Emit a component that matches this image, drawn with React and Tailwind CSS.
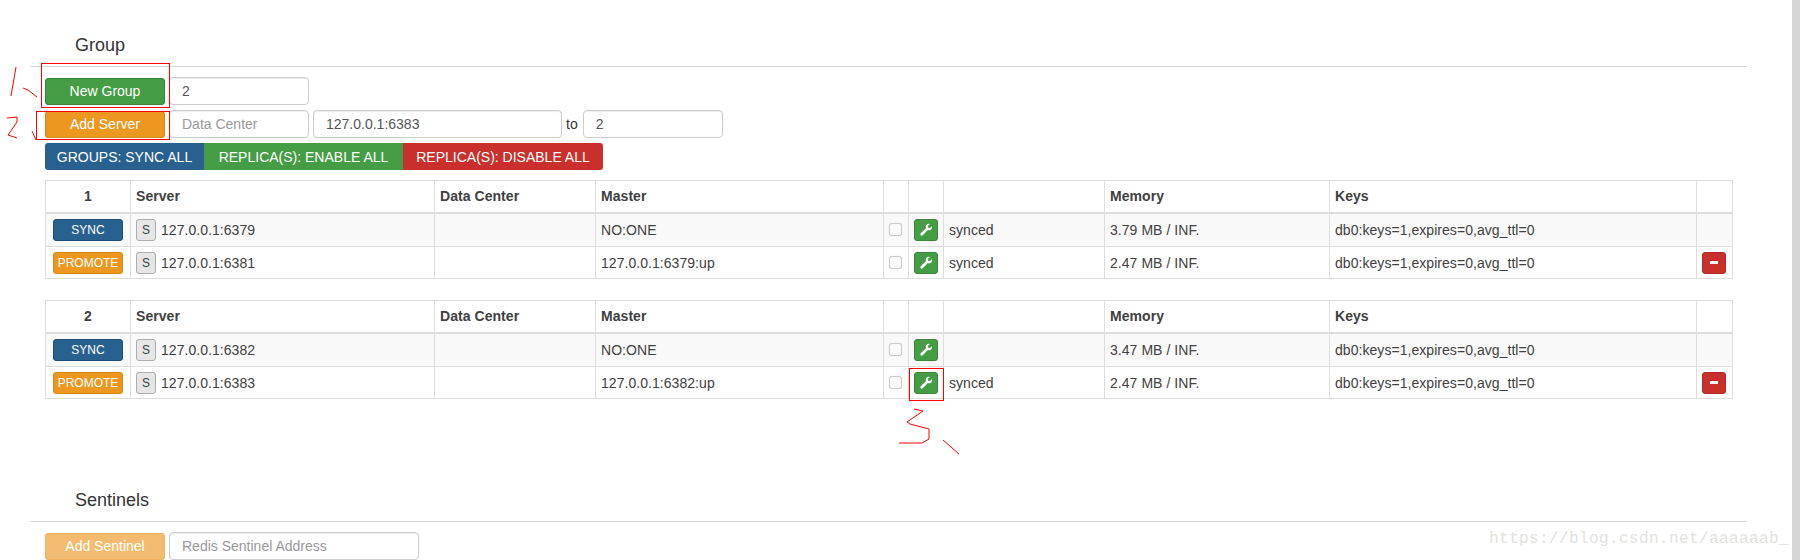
const TXT = "font-['Liberation_Sans',Arial,sans-serif]";

const groups = [
  {
    id: 1,
    rows: [
      { action: "SYNC", addr: "127.0.0.1:6379", master: "NO:ONE", status: "synced", mem: "3.79 MB / INF." },
      { action: "PROMOTE", addr: "127.0.0.1:6381", master: "127.0.0.1:6379:up", status: "synced", mem: "2.47 MB / INF.", remove: true },
    ],
  },
  {
    id: 2,
    rows: [
      { action: "SYNC", addr: "127.0.0.1:6382", master: "NO:ONE", status: "", mem: "3.47 MB / INF." },
      { action: "PROMOTE", addr: "127.0.0.1:6383", master: "127.0.0.1:6382:up", status: "synced", mem: "2.47 MB / INF.", remove: true },
    ],
  },
];

function Input({ className, value, placeholder }) {
  return (
    <input
      readOnly
      value={value}
      placeholder={placeholder}
      className={`h-[28px] rounded border border-[#ccc] bg-white px-3 text-sm text-[#555] placeholder:text-[#999] shadow-[inset_0_1px_1px_rgba(0,0,0,0.075)] ${className}`}
    />
  );
}

function Btn({ color, children }) {
  return (
    <button className={`h-[27px] w-[120px] rounded-[3px] text-sm text-white ${color}`}>
      {children}
    </button>
  );
}

function Wrench() {
  return (
    <button className="flex h-[22px] w-[24px] items-center justify-center rounded-[3px] border border-[#398439] bg-[#449d44]">
      <svg width="14" height="14" viewBox="0 0 16 16" fill="#fff">
        <path d="M12.5 1.2a3.6 3.6 0 0 0-4.6 4.7L2 11.8a1.5 1.5 0 0 0 2.2 2.2l5.9-5.9a3.6 3.6 0 0 0 4.7-4.6l-2.3 2.3-2-.5-.5-2z" />
      </svg>
    </button>
  );
}

function GroupTable({ group }) {
  const th = "border border-[#ddd] border-b-2 px-[5px] font-bold";
  const td = "border border-[#ddd] px-[5px]";
  return (
    <table className="w-[1687px] table-fixed border-collapse text-sm tracking-[0.05px] text-[#404040]">
      <colgroup>
        <col className="w-[85px]" />
        <col className="w-[304px]" />
        <col className="w-[161px]" />
        <col className="w-[288px]" />
        <col className="w-[25px]" />
        <col className="w-[35px]" />
        <col className="w-[161px]" />
        <col className="w-[225px]" />
        <col className="w-[367px]" />
        <col className="w-[36px]" />
      </colgroup>
      <thead>
        <tr className="h-[32px] text-left">
          <th className={`${th} text-center`}>{group.id}</th>
          <th className={th}>Server</th>
          <th className={th}>Data Center</th>
          <th className={th}>Master</th>
          <th className={th}></th>
          <th className={th}></th>
          <th className={th}></th>
          <th className={th}>Memory</th>
          <th className={th}>Keys</th>
          <th className={th}></th>
        </tr>
      </thead>
      <tbody>
        {group.rows.map((row, i) => (
          <tr key={row.addr} className={i === 0 ? "h-[34px] bg-[#f9f9f9]" : "h-[32px]"}>
            <td className={`${td} text-center`}>
              <button
                className={`h-[22px] w-[70px] rounded-[3px] text-xs tracking-normal text-white ${
                  row.action === "SYNC" ? "border border-[#204d74] bg-[#286090]" : "border border-[#d58512] bg-[#ec971f]"
                }`}
              >
                {row.action}
              </button>
            </td>
            <td className={td}>
              <div className="flex items-center gap-[5px]">
                <span className="flex h-[22px] w-[20px] items-center justify-center rounded-[3px] border border-[#adadad] bg-[#e6e6e6] text-xs">
                  S
                </span>
                {row.addr}
              </div>
            </td>
            <td className={td}></td>
            <td className={td}>{row.master}</td>
            <td className={`${td} text-center`}>
              <input type="checkbox" readOnly className="block size-[13px] appearance-none rounded-[3px] border border-[#ccc] bg-[#fafafa] shadow-[0_0_1px_#ccc]" />
            </td>
            <td className={td}>
              <Wrench />
            </td>
            <td className={td}>{row.status}</td>
            <td className={td}>{row.mem}</td>
            <td className={td}>db0:keys=1,expires=0,avg_ttl=0</td>
            <td className={td}>
              {row.remove && (
                <button className="flex h-[22px] w-[24px] items-center justify-center rounded-[3px] border border-[#ac2925] bg-[#c9302c]">
                  <span className="h-[3px] w-[8px] bg-white"></span>
                </button>
              )}
            </td>
          </tr>
        ))}
      </tbody>
    </table>
  );
}

function Section({ title, children }) {
  return (
    <section>
      <h4 className="pl-[45px] text-lg leading-5 text-[#333]">{title}</h4>
      <div className="mt-[11px] border-t border-[#d6d6d6]"></div>
      {children}
    </section>
  );
}

// red pen marks drawn on top of the screenshot
function Annotations() {
  return (
    <svg className="pointer-events-none absolute inset-0" width="1800" height="560" fill="none" stroke="#f00" strokeWidth="1">
      <rect x="41.5" y="63.5" width="128" height="44" />
      <rect x="36.5" y="111.5" width="133" height="28" />
      <path d="M16 67 L11 96" />
      <path d="M23 88 L28 90 L37 97" />
      <path d="M7 118 L17 117 L17 122 L8 135 L17 138" />
      <path d="M32 131 L36 140" />
      <rect x="909.5" y="368.5" width="34" height="32" />
      <path d="M914 409 L923 411 L907 422 L910 424 L929 429 L929 439 L922 443 L899 443" />
      <path d="M943 440 L959 454" />
    </svg>
  );
}

export default function App() {
  return (
    <div className={`relative h-[560px] w-[1800px] overflow-hidden bg-white ${TXT}`}>
      <div className="flex h-full">
        <div className="w-[1792px] pt-[35px] pl-[30px] pr-[45px]">
          <Section title="Group">
            <div className="flex flex-col gap-[5px] pt-[10px] pl-[15px]">
              <div className="flex items-center">
                <Btn color="bg-[#449d44] border border-[#398439] mr-[4px]">New Group</Btn>
                <Input className="w-[140px]" value="2" />
              </div>
              <div className="flex items-center">
                <Btn color="bg-[#ec971f] border border-[#d58512] mr-[4px]">Add Server</Btn>
                <Input className="w-[140px]" placeholder="Data Center" />
                <Input className="ml-[4px] w-[249px]" value="127.0.0.1:6383" />
                <span className="ml-[4px] mr-[5px] text-sm text-[#333]">to</span>
                <Input className="w-[140px]" value="2" />
              </div>
              <div className="flex h-[27px] w-[558px] text-sm text-white">
                <button className="w-[159px] rounded-l-[3px] bg-[#286090]">GROUPS: SYNC ALL</button>
                <button className="w-[199px] bg-[#449d44]">REPLICA(S): ENABLE ALL</button>
                <button className="w-[200px] rounded-r-[3px] bg-[#c9302c]">REPLICA(S): DISABLE ALL</button>
              </div>
            </div>
            <div className="mt-[10px] flex flex-col gap-[21px] pl-[15px]">
              {groups.map((g) => (
                <GroupTable key={g.id} group={g} />
              ))}
            </div>
          </Section>
          <div className="mt-[91px]">
            <Section title="Sentinels">
              <div className="flex items-center pt-[10px] pl-[15px]">
                <Btn color="bg-[#f2bb6f] border border-[#eeb05f] mr-[4px]">Add Sentinel</Btn>
                <Input className="w-[250px]" placeholder="Redis Sentinel Address" />
              </div>
            </Section>
          </div>
        </div>
        <div className="w-[8px] bg-[#d6d6d6]"></div>
      </div>
      <Annotations />
      <span className="absolute top-[529px] left-[1489px] font-['Liberation_Mono',monospace] text-base leading-5 tracking-[0.4px] text-[#e2e2de]">
        https://blog.csdn.net/aaaaaab_
      </span>
    </div>
  );
}
